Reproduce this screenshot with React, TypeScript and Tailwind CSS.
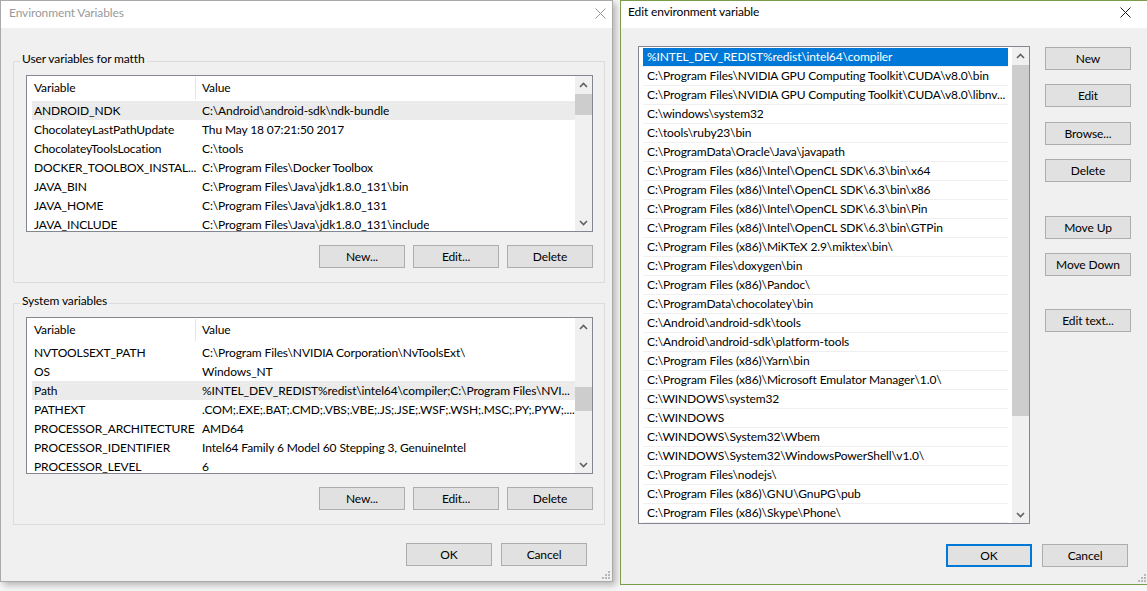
import React from "react";

const userVars: [string, string][] = [
  ["ANDROID_NDK", "C:\\Android\\android-sdk\\ndk-bundle"],
  ["ChocolateyLastPathUpdate", "Thu May 18 07:21:50 2017"],
  ["ChocolateyToolsLocation", "C:\\tools"],
  ["DOCKER_TOOLBOX_INSTAL...", "C:\\Program Files\\Docker Toolbox"],
  ["JAVA_BIN", "C:\\Program Files\\Java\\jdk1.8.0_131\\bin"],
  ["JAVA_HOME", "C:\\Program Files\\Java\\jdk1.8.0_131"],
  ["JAVA_INCLUDE", "C:\\Program Files\\Java\\jdk1.8.0_131\\include"],
];

const sysVars: [string, string][] = [
  ["NVTOOLSEXT_PATH", "C:\\Program Files\\NVIDIA Corporation\\NvToolsExt\\"],
  ["OS", "Windows_NT"],
  ["Path", "%INTEL_DEV_REDIST%redist\\intel64\\compiler;C:\\Program Files\\NVI..."],
  ["PATHEXT", ".COM;.EXE;.BAT;.CMD;.VBS;.VBE;.JS;.JSE;.WSF;.WSH;.MSC;.PY;.PYW;...."],
  ["PROCESSOR_ARCHITECTURE", "AMD64"],
  ["PROCESSOR_IDENTIFIER", "Intel64 Family 6 Model 60 Stepping 3, GenuineIntel"],
  ["PROCESSOR_LEVEL", "6"],
];

const paths: string[] = [
  "%INTEL_DEV_REDIST%redist\\intel64\\compiler",
  "C:\\Program Files\\NVIDIA GPU Computing Toolkit\\CUDA\\v8.0\\bin",
  "C:\\Program Files\\NVIDIA GPU Computing Toolkit\\CUDA\\v8.0\\libnv...",
  "C:\\windows\\system32",
  "C:\\tools\\ruby23\\bin",
  "C:\\ProgramData\\Oracle\\Java\\javapath",
  "C:\\Program Files (x86)\\Intel\\OpenCL SDK\\6.3\\bin\\x64",
  "C:\\Program Files (x86)\\Intel\\OpenCL SDK\\6.3\\bin\\x86",
  "C:\\Program Files (x86)\\Intel\\OpenCL SDK\\6.3\\bin\\Pin",
  "C:\\Program Files (x86)\\Intel\\OpenCL SDK\\6.3\\bin\\GTPin",
  "C:\\Program Files (x86)\\MiKTeX 2.9\\miktex\\bin\\",
  "C:\\Program Files\\doxygen\\bin",
  "C:\\Program Files (x86)\\Pandoc\\",
  "C:\\ProgramData\\chocolatey\\bin",
  "C:\\Android\\android-sdk\\tools",
  "C:\\Android\\android-sdk\\platform-tools",
  "C:\\Program Files (x86)\\Yarn\\bin",
  "C:\\Program Files (x86)\\Microsoft Emulator Manager\\1.0\\",
  "C:\\WINDOWS\\system32",
  "C:\\WINDOWS",
  "C:\\WINDOWS\\System32\\Wbem",
  "C:\\WINDOWS\\System32\\WindowsPowerShell\\v1.0\\",
  "C:\\Program Files\\nodejs\\",
  "C:\\Program Files (x86)\\GNU\\GnuPG\\pub",
  "C:\\Program Files (x86)\\Skype\\Phone\\",
];

function Chevron({ down = false }: { down?: boolean }) {
  return (
    <svg width="9" height="6" viewBox="0 0 9 6" className={down ? "rotate-180" : ""}>
      <polyline points="1,5 4.5,1.5 8,5" fill="none" stroke="#606060" strokeWidth="1.6" />
    </svg>
  );
}

function ScrollBar({ thumbClass }: { thumbClass: string }) {
  return (
    <div className="w-[17px] shrink-0 bg-[#f0f0f0] flex flex-col">
      <div className="h-[17px] shrink-0 flex items-center justify-center">
        <Chevron />
      </div>
      <div className="flex-1 min-h-0">
        <div className={`bg-[#cdcdcd] ${thumbClass}`} />
      </div>
      <div className="h-[17px] shrink-0 flex items-center justify-center">
        <Chevron down />
      </div>
    </div>
  );
}

function Btn({ label, primary = false }: { label: string; primary?: boolean }) {
  return (
    <button
      type="button"
      className={`w-[86px] h-[23px] shrink-0 flex items-center justify-center bg-[#e1e1e1] text-black ${
        primary ? "border-2 border-[#0078d7]" : "border border-[#adadad]"
      }`}
    >
      {label}
    </button>
  );
}

function CloseX({ color }: { color: string }) {
  return (
    <svg width="11" height="11" viewBox="0 0 11 11">
      <line x1="0.5" y1="0.5" x2="10.5" y2="10.5" stroke={color} strokeWidth="1" />
      <line x1="10.5" y1="0.5" x2="0.5" y2="10.5" stroke={color} strokeWidth="1" />
    </svg>
  );
}

function Grip() {
  return (
    <svg width="8" height="8" viewBox="0 0 8 8">
      <rect x="6" y="0" width="2" height="2" fill="#b8b8b8" />
      <rect x="3" y="3" width="2" height="2" fill="#b8b8b8" />
      <rect x="6" y="3" width="2" height="2" fill="#b8b8b8" />
      <rect x="0" y="6" width="2" height="2" fill="#b8b8b8" />
      <rect x="3" y="6" width="2" height="2" fill="#b8b8b8" />
      <rect x="6" y="6" width="2" height="2" fill="#b8b8b8" />
    </svg>
  );
}

function VarList({
  rows,
  selected,
  thumbClass,
}: {
  rows: [string, string][];
  selected: number;
  thumbClass: string;
}) {
  return (
    <div className="w-[567px] h-[157px] border border-[#828790] bg-white flex overflow-hidden">
      <div className="flex-1 min-w-0 overflow-hidden">
        <div className="h-[24px] ml-[5px] flex items-center">
          <div className="w-[163px] pl-[2px] shrink-0">Variable</div>
          <div className="w-px h-[22px] bg-[#e5e5e5] shrink-0" />
          <div className="pl-[6px]">Value</div>
        </div>
        <div className="pt-[1px]">
          {rows.map(([k, v], i) => (
            <div
              key={k}
              className={`h-[19px] ml-[5px] flex items-center whitespace-nowrap ${
                i === selected ? "bg-[#ebebeb]" : ""
              }`}
            >
              <div className="w-[168px] pl-[2px] shrink-0 overflow-hidden">{k}</div>
              <div className="pl-[2px] overflow-hidden">{v}</div>
            </div>
          ))}
        </div>
      </div>
      <ScrollBar thumbClass={thumbClass} />
    </div>
  );
}

function Group({
  title,
  rows,
  selected,
  thumbClass,
  mtClass,
}: {
  title: string;
  rows: [string, string][];
  selected: number;
  thumbClass: string;
  mtClass: string;
}) {
  return (
    <div className={`relative ml-[12px] w-[592px] h-[222px] border border-[#dcdcdc] ${mtClass}`}>
      <div className="absolute left-[6px] -top-[11px] px-[2px] bg-[#f0f0f0] leading-[16px]">{title}</div>
      <div className="ml-[12px] mt-[13px]">
        <VarList rows={rows} selected={selected} thumbClass={thumbClass} />
        <div className="w-[567px] mt-[13px] flex justify-end gap-[8px]">
          <Btn label="New..." />
          <Btn label="Edit..." />
          <Btn label="Delete" />
        </div>
      </div>
    </div>
  );
}

function LeftWindow() {
  return (
    <div className="absolute left-0 top-0 w-[613px] h-[582px] bg-[#f0f0f0] border border-[#aaaaaa] shadow-[3px_3px_7px_rgba(0,0,0,0.28)] flex flex-col">
      <div className="h-[27px] shrink-0 bg-white flex items-start justify-between pt-[4px] pl-[8px] pr-[6px] text-[#9a9a9a]">
        <span className="h-[16px] flex items-center">Environment Variables</span>
        <span className="h-[16px] flex items-center">
          <CloseX color="#9a9a9a" />
        </span>
      </div>
      <div className="flex-1 flex flex-col">
        <Group
          title="User variables for matth"
          rows={userVars}
          selected={0}
          thumbClass="mt-[1px] h-[21px]"
          mtClass="mt-[33px]"
        />
        <Group
          title="System variables"
          rows={sysVars}
          selected={2}
          thumbClass="mt-[52px] h-[24px]"
          mtClass="mt-[20px]"
        />
        <div className="mt-[18px] flex gap-[9px] pl-[405px]">
          <Btn label="OK" />
          <Btn label="Cancel" />
        </div>
      </div>
      <div className="absolute right-[2px] bottom-[2px] flex">
        <Grip />
      </div>
    </div>
  );
}

function RightWindow() {
  return (
    <div className="absolute left-[620px] top-0 w-[528px] h-[585px] bg-[#f0f0f0] border border-r-0 border-[#7b9c4a] flex flex-col">
      <div className="h-[27px] shrink-0 bg-white flex items-start justify-between pt-[3px] pl-[7px] pr-[17px] text-black">
        <span className="h-[16px] flex items-center">Edit environment variable</span>
        <span className="h-[16px] flex items-center">
          <CloseX color="#1a1a1a" />
        </span>
      </div>
      <div className="flex-1 flex flex-col">
        <div className="flex">
          <div className="ml-[17px] mt-[18px] w-[392px] h-[478px] border border-[#828790] bg-white flex overflow-hidden">
            <div className="flex-1 min-w-0 pl-[4px] pr-[4px] pt-[1px] overflow-hidden">
              {paths.map((p, i) => (
                <div
                  key={p}
                  className={`h-[19px] border-b border-[#efefef] flex items-center pl-[4px] whitespace-nowrap overflow-hidden ${
                    i === 0 ? "bg-[#0078d7] text-white" : "text-black"
                  }`}
                >
                  {p}
                </div>
              ))}
            </div>
            <ScrollBar thumbClass="mt-[1px] h-[351px]" />
          </div>
          <div className="ml-[15px] mt-[19px] flex flex-col">
            <Btn label="New" />
            <div className="mt-[14px]">
              <Btn label="Edit" />
            </div>
            <div className="mt-[15px]">
              <Btn label="Browse..." />
            </div>
            <div className="mt-[14px]">
              <Btn label="Delete" />
            </div>
            <div className="mt-[34px]">
              <Btn label="Move Up" />
            </div>
            <div className="mt-[14px]">
              <Btn label="Move Down" />
            </div>
            <div className="mt-[33px]">
              <Btn label="Edit text..." />
            </div>
          </div>
        </div>
        <div className="mt-[20px] pl-[325px] flex gap-[10px]">
          <Btn label="OK" primary />
          <Btn label="Cancel" />
        </div>
      </div>
      <div className="absolute right-[2px] bottom-[2px] flex">
        <Grip />
      </div>
    </div>
  );
}

export default function App() {
  return (
    <div className="relative w-[1147px] h-[591px] overflow-hidden bg-[#f7f7f7] text-[12px] leading-[16px] tracking-[-0.12px] text-black font-['Lato','Liberation_Sans',Arial,sans-serif]">
      <LeftWindow />
      <RightWindow />
    </div>
  );
}
